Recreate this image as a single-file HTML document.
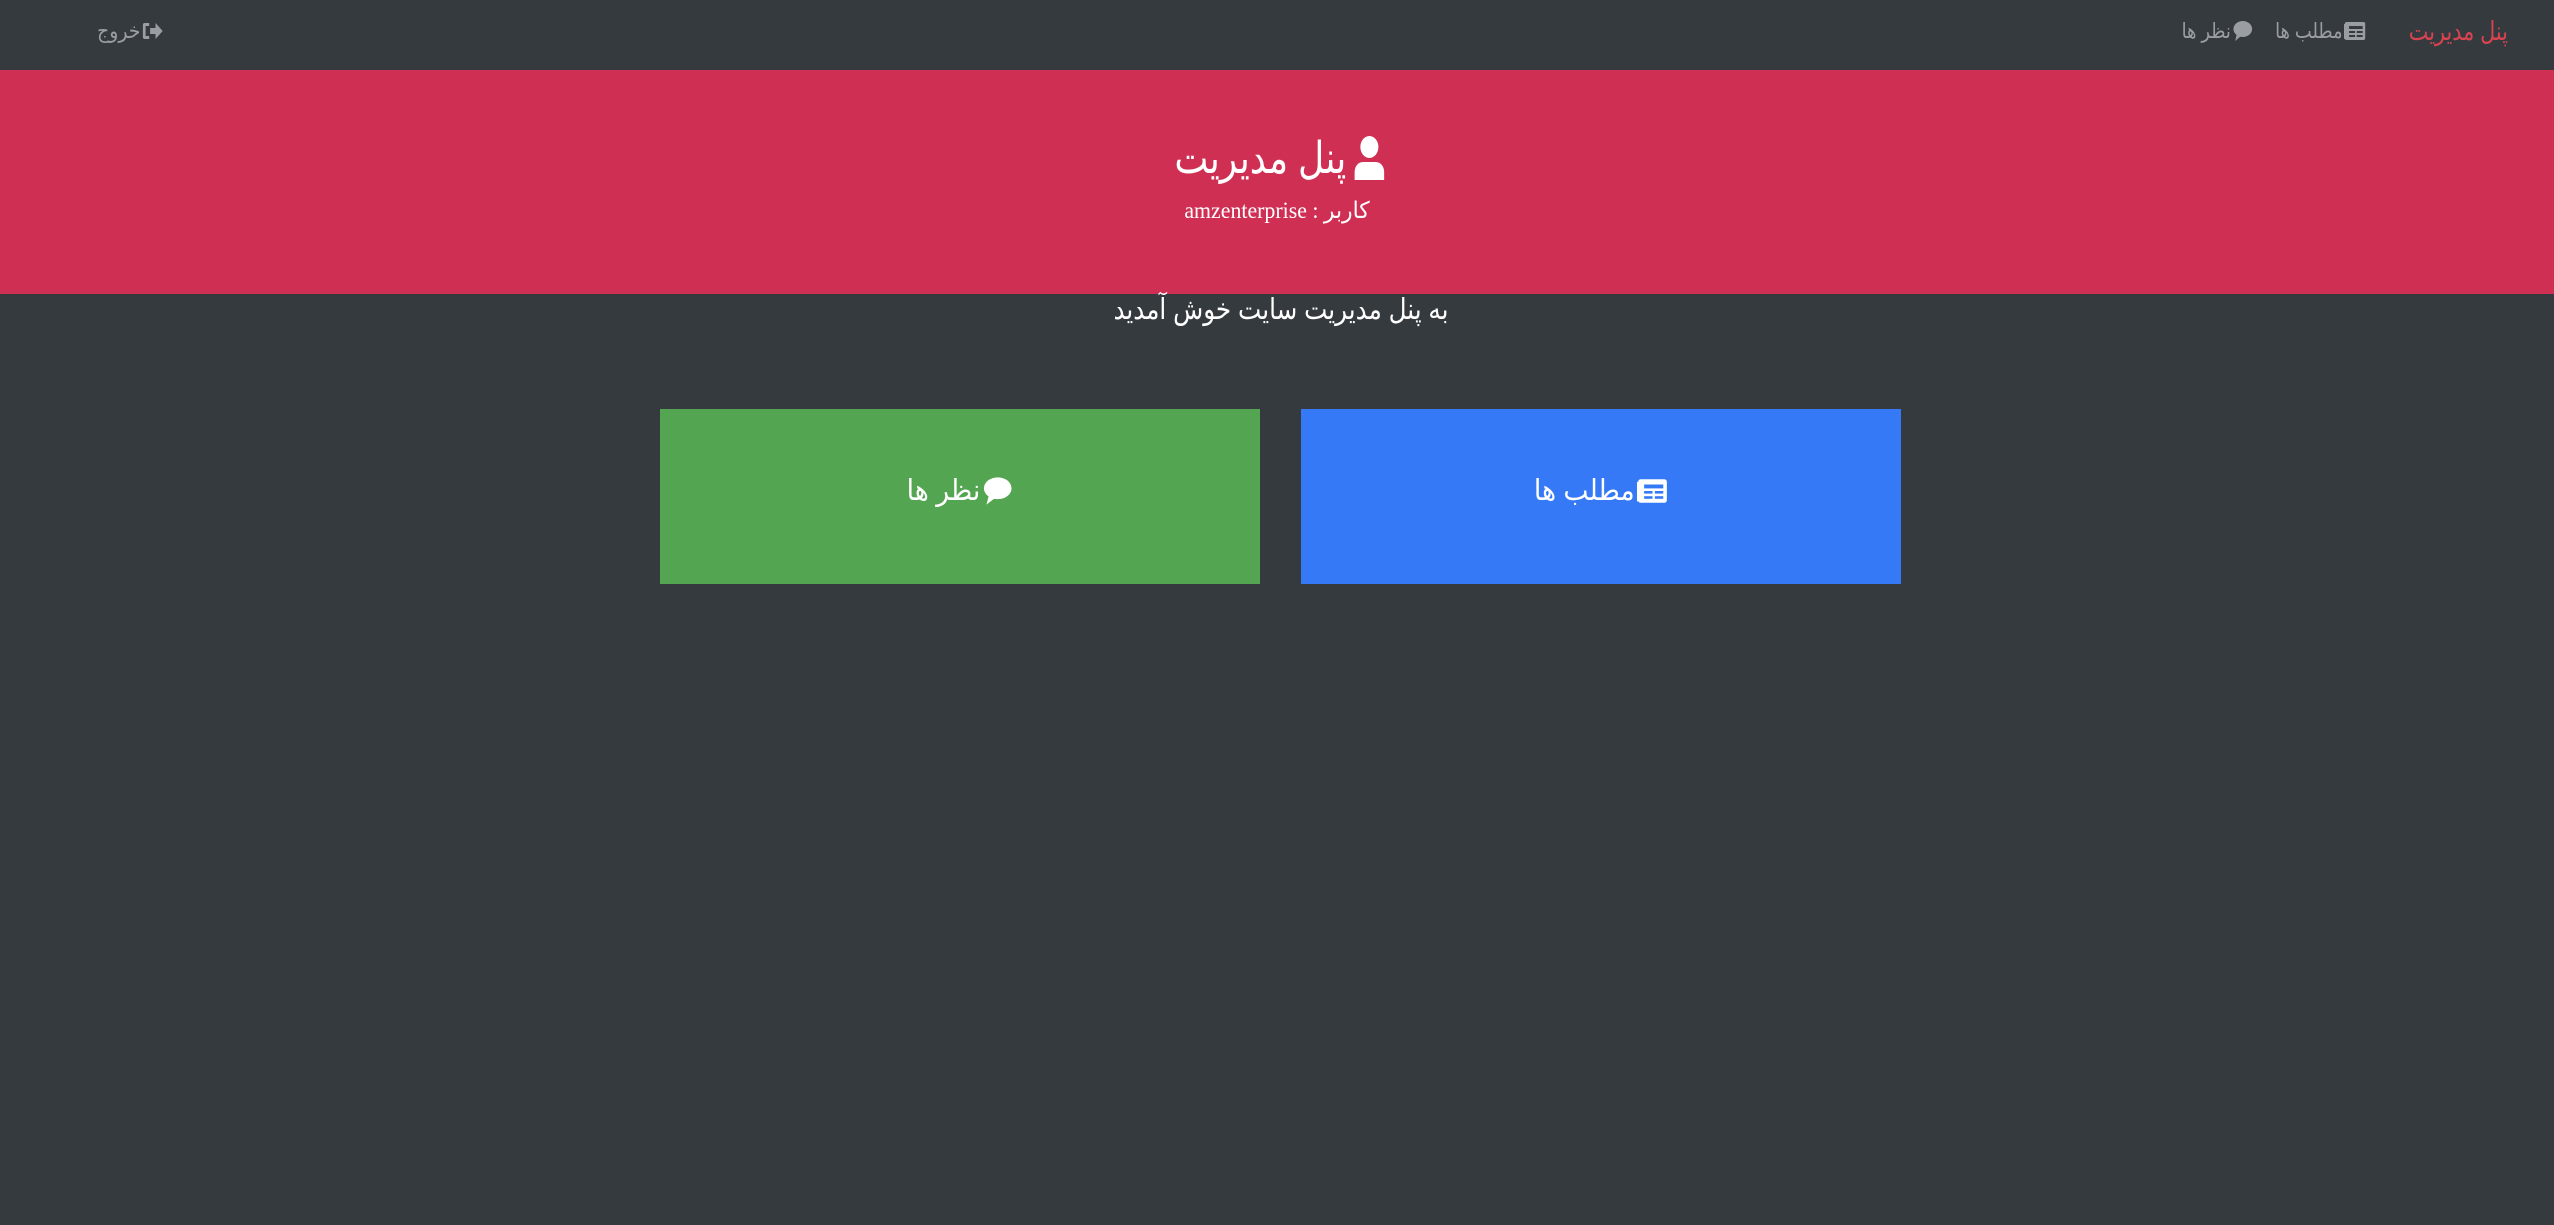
<!DOCTYPE html>
<html><head><meta charset="utf-8"><style>
*{margin:0;padding:0;box-sizing:border-box}
body{width:2554px;height:1225px;background:#353a3f;font-family:"Liberation Sans","DejaVu Sans",sans-serif;position:relative;overflow:hidden;color:#fff}
.a{position:absolute;display:flex;align-items:center;white-space:nowrap;direction:rtl}
.r{transform:scaleX(.85);transform-origin:right center}
.c{transform:scaleX(.85);transform-origin:center center}
svg{display:block}
</style></head><body>
<div class="a r" style="right:46px;top:14px;height:34px;font-size:26px;color:#d9434f;transform:scaleX(.8)">پنل مدیریت</div>
<div class="a r" style="right:188px;top:14px;height:34px;font-size:21px;color:#9a9da1;gap:2px">
<svg width="26" height="20" viewBox="0 0 26 20"><rect x="1" y="1" width="24" height="18" rx="2" fill="#9a9da1"/><rect x="0" y="3" width="3" height="15" fill="#9a9da1"/><g fill="#353a3f"><rect x="6" y="5" width="16" height="3"/><rect x="6" y="10" width="7" height="2"/><rect x="15" y="10" width="7" height="2"/><rect x="6" y="14" width="7" height="2"/><rect x="15" y="14" width="7" height="2"/></g></svg>
<span>مطلب ها</span></div>
<div class="a r" style="right:301px;top:14px;height:34px;font-size:21px;color:#9a9da1;gap:2px">
<svg width="24" height="22" viewBox="0 0 24 22"><ellipse cx="12" cy="9" rx="11" ry="8" fill="#9a9da1"/><path d="M5 14 L3 21 L10 16Z" fill="#9a9da1"/></svg>
<span>نظر ها</span></div>
<div class="a" style="left:97px;top:14px;height:34px;font-size:21px;color:#9a9da1;gap:2px;transform:scaleX(.9);transform-origin:left center">
<svg width="24" height="20" viewBox="0 0 24 20"><path d="M8 2H3a2 2 0 0 0-2 2v12a2 2 0 0 0 2 2h5v-3H4V5h4z" fill="#9a9da1"/><path d="M9 7h6V2l8 8-8 8v-5H9z" fill="#9a9da1"/></svg>
<span>خروج</span></div>

<div style="position:absolute;left:0;top:70px;width:2554px;height:224px;background:#d02f54"></div>
<div class="a c" style="left:0;width:2560px;justify-content:center;top:130px;height:56px;font-size:44px;gap:8px;transform:scaleX(.82)">
<svg width="40" height="44" viewBox="0 0 40 44"><circle cx="20" cy="11" r="11" fill="#fff"/><path d="M2 44V36a10 10 0 0 1 10-10h16a10 10 0 0 1 10 10v8z" fill="#fff"/></svg>
<span>پنل مدیریت</span></div>
<div class="c" style="position:absolute;left:0;width:2554px;top:198px;text-align:center;font-size:23px;direction:rtl;font-family:'Liberation Serif','DejaVu Sans',serif;transform:scaleX(.95)">کاربر : amzenterprise</div>
<div class="c" style="position:absolute;left:0;width:2562px;top:292px;text-align:center;font-size:29px;direction:rtl">به پنل مدیریت سایت خوش آمدید</div>

<div class="a" style="left:660px;top:409px;width:600px;height:175px;background:#54a552;justify-content:center;font-size:29px;padding-bottom:12px">
<div style="display:flex;align-items:center;gap:2px;transform:scaleX(.92)">
<svg width="34" height="30" viewBox="0 0 24 22"><ellipse cx="12" cy="9" rx="11" ry="8" fill="#fff"/><path d="M5 14 L3 21 L10 16Z" fill="#fff"/></svg>
<span>نظر ها</span></div></div>
<div class="a" style="left:1301px;top:409px;width:600px;height:175px;background:#3579f6;justify-content:center;font-size:29px;padding-bottom:12px">
<div style="display:flex;align-items:center;gap:2px;transform:scaleX(.92)">
<svg width="34" height="26" viewBox="0 0 26 20"><rect x="1" y="1" width="24" height="18" rx="2" fill="#fff"/><rect x="0" y="3" width="3" height="15" fill="#fff"/><g fill="#3579f6"><rect x="6" y="5" width="16" height="3"/><rect x="6" y="10" width="7" height="2"/><rect x="15" y="10" width="7" height="2"/><rect x="6" y="14" width="7" height="2"/><rect x="15" y="14" width="7" height="2"/></g></svg>
<span>مطلب ها</span></div></div>
</body></html>
